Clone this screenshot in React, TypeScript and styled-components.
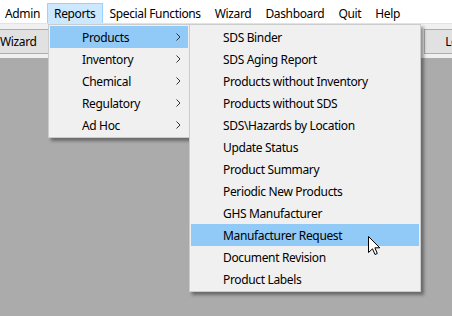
import React from "react";
import styled, { createGlobalStyle } from "styled-components";

const Global = createGlobalStyle`
  html, body { margin: 0; padding: 0; }
  body { width: 452px; height: 316px; overflow: hidden; background: #ababab; }
  * { box-sizing: border-box; }
`;

const Page = styled.div`
  position: relative;
  width: 452px;
  height: 316px;
  display: flex;
  flex-direction: column;
  background: #ababab;
  font-family: "Noto Sans", "Open Sans", sans-serif;
  font-size: 12px;
  letter-spacing: -0.35px;
  color: #000;
  overflow: hidden;
`;

const MenuBar = styled.div`
  height: 23px;
  display: flex;
  align-items: flex-end;
  background: #ffffff;
  & > :first-child {
    margin-left: -2px;
  }
`;

const BarItem = styled.div<{ $active?: boolean }>`
  height: 20px;
  display: flex;
  align-items: center;
  padding: 0 6px;
  border: 1px solid ${(p) => (p.$active ? "#99d1ff" : "transparent")};
  border-bottom: none;
  background: ${(p) => (p.$active ? "#cce8ff" : "transparent")};
  white-space: nowrap;
`;

const Toolbar = styled.div`
  height: 35px;
  display: flex;
  align-items: center;
  justify-content: space-between;
  background: #f0f0f0;
  border-top: 1px solid #e3e3e3;
`;

const ToolButton = styled.div<{ $side: "left" | "right" }>`
  height: 25px;
  display: flex;
  align-items: center;
  flex-shrink: 0;
  padding: ${(p) => (p.$side === "left" ? "0 11px" : "0 20px")};
  background: #e1e1e1;
  border: 1px solid #adadad;
  white-space: nowrap;
  margin-left: ${(p) => (p.$side === "left" ? "-12px" : "0")};
  margin-right: ${(p) => (p.$side === "right" ? "-52px" : "0")};
`;

const Workspace = styled.div`
  flex: 1;
  background: #ababab;
`;

const Menu = styled.div<{ $left: number; $width: number }>`
  position: absolute;
  top: 24px;
  left: ${(p) => p.$left}px;
  width: ${(p) => p.$width}px;
  background: #f0f0f0;
  border: 1px solid #cccccc;
  padding: 1px 1px;
  box-shadow: 3px 3px 3px rgba(0, 0, 0, 0.38);
  display: flex;
  flex-direction: column;
`;

const Item = styled.div<{ $hot?: boolean }>`
  height: 22px;
  display: flex;
  align-items: center;
  justify-content: space-between;
  padding-left: 32px;
  padding-right: 7px;
  background: ${(p) => (p.$hot ? "#91c9f7" : "transparent")};
  white-space: nowrap;
`;

const Chevron = () => (
  <svg width="5" height="8" viewBox="0 0 5 8">
    <polyline points="0.5,0.5 4,4 0.5,7.5" fill="none" stroke="#333" strokeWidth="1" />
  </svg>
);

const Cursor = styled.svg`
  position: absolute;
  left: 368px;
  top: 236px;
`;

const reports = ["Products", "Inventory", "Chemical", "Regulatory", "Ad Hoc"];
const products = [
  "SDS Binder",
  "SDS Aging Report",
  "Products without Inventory",
  "Products without SDS",
  "SDS\\Hazards by Location",
  "Update Status",
  "Product Summary",
  "Periodic New Products",
  "GHS Manufacturer",
  "Manufacturer Request",
  "Document Revision",
  "Product Labels",
];
const bar = ["Admin", "Reports", "Special Functions", "Wizard", "Dashboard", "Quit", "Help"];

export default function App() {
  return (
    <Page>
      <Global />
      <MenuBar>
        {bar.map((b) => (
          <BarItem key={b} $active={b === "Reports"}>
            {b}
          </BarItem>
        ))}
      </MenuBar>
      <Toolbar>
        <ToolButton $side="left">Wizard</ToolButton>
        <ToolButton $side="right">Logout</ToolButton>
      </Toolbar>
      <Workspace />
      <Menu $left={48} $width={142}>
        {reports.map((r, i) => (
          <Item key={r} $hot={i === 0}>
            {r}
            <Chevron />
          </Item>
        ))}
      </Menu>
      <Menu $left={189} $width={232}>
        {products.map((p) => (
          <Item key={p} $hot={p === "Manufacturer Request"}>
            {p}
          </Item>
        ))}
      </Menu>
      <Cursor width="13" height="20" viewBox="0 0 13 20">
        <path
          d="M0.5,0.5 L0.5,16.5 L4.5,12.8 L7,18.5 L9.3,17.5 L6.9,11.8 L11.8,11.8 Z"
          fill="#fff"
          stroke="#000"
          strokeWidth="1"
          strokeLinejoin="miter"
        />
      </Cursor>
    </Page>
  );
}
